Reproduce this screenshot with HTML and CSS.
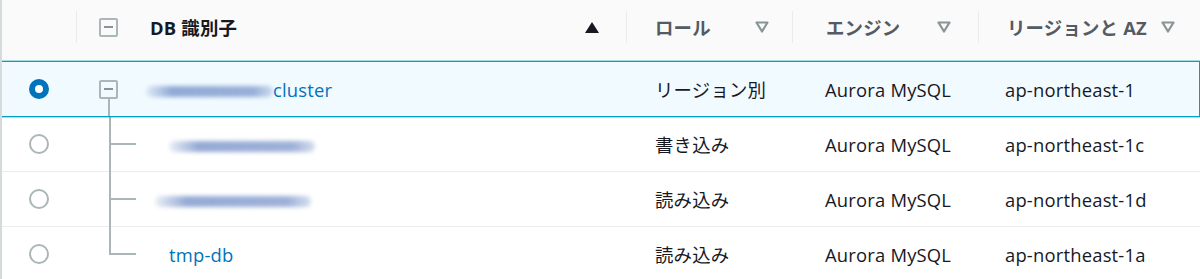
FILE: index.html
```html
<!DOCTYPE html>
<html lang="ja">
<head>
    <meta charset="UTF-8">
    <meta name="viewport" content="width=device-width, initial-scale=1.0">
    <title>データベース</title>
    <link rel="stylesheet" href="styles.css">
</head>
<body>

    <div class="table">
        <!-- En-tête -->
        <div class="row head">
            <div class="cell"></div>
            <div class="cell">
                <div class="th">
                    <span class="box"></span>
                    <span class="label active">DB 識別子</span>
                    <svg class="sort" width="14" height="11" viewBox="0 0 14 11"><polygon points="7,0 14,11 0,11" fill="#16191f"/></svg>
                </div>
            </div>
            <div class="cell">
                <div class="th col-role">
                    <span class="label">ロール</span>
                    <svg class="filter" width="14" height="12" viewBox="0 0 14 12"><polygon points="1.5,1.5 12.5,1.5 7,10.5" fill="none" stroke="#879596" stroke-width="2.2" stroke-linejoin="round"/></svg>
                </div>
            </div>
            <div class="cell">
                <div class="th col-engine">
                    <span class="label">エンジン</span>
                    <svg class="filter" width="14" height="12" viewBox="0 0 14 12"><polygon points="1.5,1.5 12.5,1.5 7,10.5" fill="none" stroke="#879596" stroke-width="2.2" stroke-linejoin="round"/></svg>
                </div>
            </div>
            <div class="cell">
                <div class="th col-region">
                    <span class="label">リージョンと AZ</span>
                    <svg class="filter" width="14" height="12" viewBox="0 0 14 12"><polygon points="1.5,1.5 12.5,1.5 7,10.5" fill="none" stroke="#879596" stroke-width="2.2" stroke-linejoin="round"/></svg>
                </div>
            </div>
        </div>

        <!-- Cluster sélectionné -->
        <div class="row selected">
            <div class="cell radio-cell"><span class="radio checked"></span></div>
            <div class="cell ident">
                <div class="node">
                    <span class="spacer"></span>
                    <span class="box"></span>
                    <span class="stem"></span>
                </div>
                <a href="#" class="link cluster-link"><span class="masked" style="width:127px"></span>cluster</a>
            </div>
            <div class="cell role">リージョン別</div>
            <div class="cell engine">Aurora MySQL</div>
            <div class="cell region">ap-northeast-1</div>
        </div>

        <!-- Instances -->
        <div class="row">
            <div class="cell radio-cell"><span class="radio"></span></div>
            <div class="cell ident">
                <div class="branch"><span class="b-top"></span><span class="b-bottom"></span></div>
                <a href="#" class="link"><span class="masked" style="width:146px"></span></a>
            </div>
            <div class="cell role">書き込み</div>
            <div class="cell engine">Aurora MySQL</div>
            <div class="cell region">ap-northeast-1c</div>
        </div>
        <div class="row">
            <div class="cell radio-cell"><span class="radio"></span></div>
            <div class="cell ident">
                <div class="branch"><span class="b-top"></span><span class="b-bottom"></span></div>
                <a href="#" class="link"><span class="masked shift" style="width:156px"></span></a>
            </div>
            <div class="cell role">読み込み</div>
            <div class="cell engine">Aurora MySQL</div>
            <div class="cell region">ap-northeast-1d</div>
        </div>
        <div class="row">
            <div class="cell radio-cell"><span class="radio"></span></div>
            <div class="cell ident">
                <div class="branch last"><span class="b-top"></span><span class="b-bottom"></span></div>
                <a href="#" class="link">tmp-db</a>
            </div>
            <div class="cell role">読み込み</div>
            <div class="cell engine">Aurora MySQL</div>
            <div class="cell region">ap-northeast-1a</div>
        </div>
    </div>

</body>
</html>
```

FILE: styles.css
```css
body {
    font-family: "Open Sans", "Noto Sans CJK JP", sans-serif;
    font-size: 18.4px;
    letter-spacing: 0.2px;
    color: #16191f;
    background-color: #fff;
    margin: 0;
    padding: 0;
}
.table {
    border-left: 2px solid #d5dbdb;
    height: 279px;
    overflow: hidden;
}
.row {
    display: grid;
    grid-template-columns: 74px 550px 166px 186px 1fr;
    height: 54px;
    border-bottom: 1px solid #eaeded;
}
.cell {
    display: flex;
    align-items: center;
    min-width: 0;
    white-space: nowrap;
}

/* En-tête */
.row.head {
    height: 61px;
    background-color: #fafafa;
    border-bottom: none;
}
.head .cell {
    align-items: flex-start;
    padding-top: 11px;
}
.th {
    flex: 1;
    display: flex;
    align-items: center;
    height: 32px;
    border-left: 1px solid #eaeded;
    padding-left: 22px;
    padding-right: 27px;
}
.th .box {
    margin-right: 32px;
}
.label {
    flex: 1;
    font-weight: bold;
    color: #545b64;
}
.label.active {
    color: #16191f;
}
.col-role {
    padding-left: 28px;
    padding-right: 23px;
}
.col-engine {
    padding-left: 33px;
    padding-right: 27px;
}
.col-region {
    padding-left: 28px;
    padding-right: 25px;
}

/* Ligne sélectionnée */
.row.selected {
    height: 54px;
    background-color: #f1faff;
    border: 1px solid #00a1c9;
    box-shadow: 0 0 0 1px rgba(0, 161, 201, 0.35);
    margin-left: -1px;
    position: relative;
}

/* Boutons radio */
.radio-cell {
    justify-content: center;
}
.radio {
    width: 20px;
    height: 20px;
    box-sizing: border-box;
    border: 2px solid #aab7b8;
    border-radius: 50%;
    background-color: #fff;
}
.radio.checked {
    border: 6px solid #0073bb;
}

/* Arborescence */
.box {
    width: 19px;
    height: 19px;
    box-sizing: border-box;
    border: 2px solid #aab7b8;
    border-radius: 2px;
    display: flex;
    align-items: center;
    justify-content: center;
    flex-shrink: 0;
}
.box::after {
    content: "";
    width: 9px;
    height: 2px;
    background-color: #879596;
}
.ident {
    align-items: stretch;
}
.node {
    display: flex;
    flex-direction: column;
    align-items: center;
    width: 19px;
    margin-left: 23px;
    margin-right: 29px;
}
.node .spacer {
    flex: 1;
}
.node .stem {
    flex: 1;
    width: 2px;
    background-color: #aab7b8;
}
.branch {
    display: flex;
    flex-direction: column;
    width: 27px;
    margin-left: 33px;
    margin-right: 33px;
    margin-top: -1px;
    margin-bottom: -1px;
}
.b-top {
    flex: 1;
    border-left: 2px solid #aab7b8;
    border-bottom: 2px solid #aab7b8;
}
.b-bottom {
    flex: 1;
    border-left: 2px solid #aab7b8;
}
.branch.last .b-bottom {
    border-left-color: transparent;
}
.link {
    align-self: center;
    display: flex;
    align-items: center;
    color: #0073bb;
    text-decoration: none;
}
.cluster-link {
    margin-left: -1px;
}
.masked {
    display: inline-block;
    height: 11px;
    margin-top: 4px;
    border-radius: 5px;
    background: linear-gradient(90deg, rgba(120, 150, 200, 0.15), rgba(105, 135, 195, 0.7) 20%, rgba(105, 135, 195, 0.65) 85%, rgba(120, 150, 200, 0.3));
    filter: blur(2px);
}
.masked.shift {
    margin-left: -14px;
}

/* Colonnes */
.role {
    padding-left: 29px;
}
.engine {
    padding-left: 33px;
}
.region {
    padding-left: 27px;
}
```
